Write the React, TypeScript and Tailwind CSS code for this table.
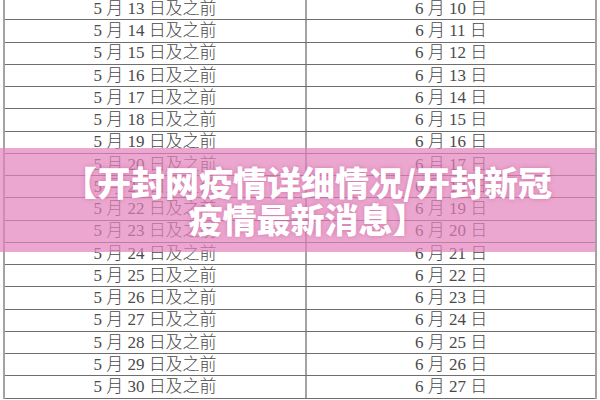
const rows = [13, 14, 15, 16, 17, 18, 19, 20, 21, 22, 23, 24, 25, 26, 27, 28, 29, 30]

export default function App() {
  return (
    <div className="relative w-[600px] h-[400px] overflow-hidden bg-white">
      <div
        className="ml-[3px] w-[594px] -mt-[2px] border-x-2 border-[#a3a3a3] text-[#4a4a4a] text-[17px]"
        style={{ fontFamily: '"Liberation Serif", "Noto Sans CJK SC", serif' }}
      >
        {rows.map((d) => (
          <div key={d} className="flex h-[22.25px] border-b border-[#6e6e6e]">
            <div className="w-[302px] flex items-center justify-center border-r-2 border-[#a3a3a3] font-light">
              5 月 {d} 日及之前
            </div>
            <div className="flex-1 flex items-center justify-center font-light">
              6 月 {d - 3} 日
            </div>
          </div>
        ))}
      </div>

      {/* pink title banner over the table */}
      <div className="absolute left-0 top-[148px] w-[595px] h-[104px] bg-[rgba(226,130,186,0.7)] flex items-center justify-center pl-[20px]">
        <div
          className="text-white text-[34px] font-black leading-[37px] text-center [text-shadow:0_0_4px_rgba(200,90,150,0.6)]"
          style={{ fontFamily: '"Noto Sans CJK SC", sans-serif' }}
        >
          【开封网疫情详细情况/开封新冠
          <br />
          疫情最新消息】
        </div>
      </div>
    </div>
  )
}
